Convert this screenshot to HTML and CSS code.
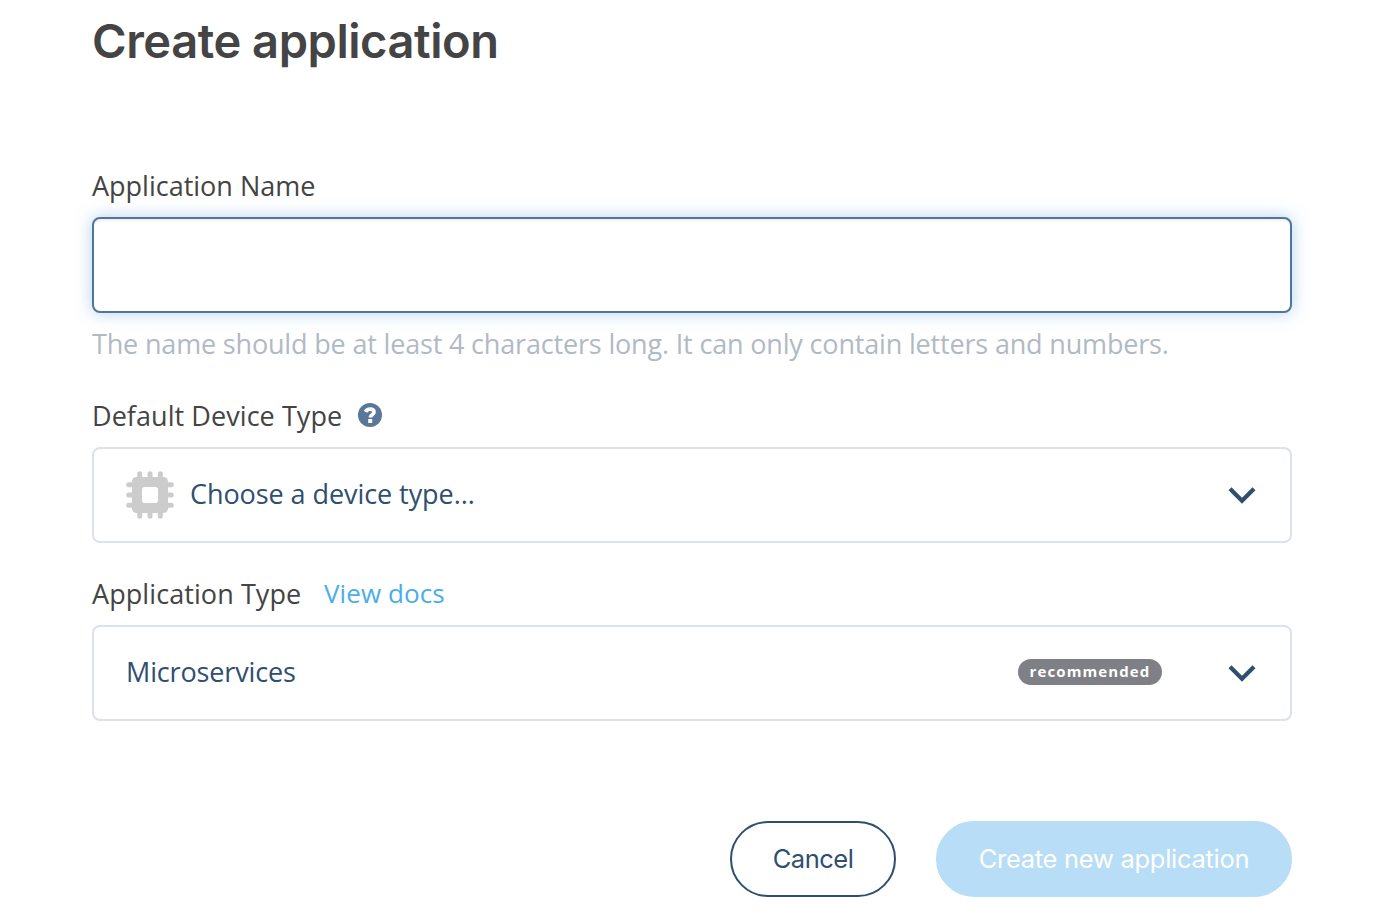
FILE: index.html
```html
<!DOCTYPE html>
<html lang="en">
<head>
<meta charset="utf-8">
<title>Create application</title>
<link rel="stylesheet" href="styles.css">
</head>
<body>
<main class="dialog">
  <h1 class="title"><span>Create application</span></h1>
  <form class="form">
    <div class="field">
      <label class="label" for="name"><span class="t-name">Application Name</span></label>
      <input class="control input" id="name" type="text">
      <p class="hint"><span>The name should be at least 4 characters long. It can only contain letters and numbers.</span></p>
    </div>
    <div class="field field-device">
      <div class="label"><span class="t-device">Default Device Type</span>
        <svg class="help" viewBox="0 0 24 24" width="24" height="24"><circle cx="12" cy="12" r="12" fill="#5a7799"/><path d="M7.600 8.900C8.500 7 10 6.200 12 6.200c2.300 0 4 1.100 4 3.000 0 2.500-3.700 2.500-3.700 5.300" fill="none" stroke="#fff" stroke-width="3.700"/><rect x="10.200" y="16" width="4" height="4" fill="#fff"/></svg>
      </div>
      <div class="control select">
        <svg class="chip" viewBox="0 0 48 48" width="48" height="48"><g stroke="#ccc" stroke-width="5" stroke-linecap="round"><path d="M13.700 2.700v42.600M24 2.700v42.600M34.300 2.700v42.600M2.700 13.700h42.600M2.700 24h42.600M2.700 34.300h42.600"/></g><rect x="6" y="6" width="36" height="36" rx="4.500" fill="#ccc"/><rect x="16" y="16" width="16" height="16" rx="2.500" fill="#fff"/></svg>
        <span class="value t-choose">Choose a device type...</span>
        <svg class="chevron" viewBox="0 0 28 18" width="28" height="18"><path d="M2 2.800l12 12 12-12" fill="none" stroke="#2f4f70" stroke-width="4.200"/></svg>
      </div>
    </div>
    <div class="field field-type">
      <div class="label"><span class="t-type">Application Type</span><a class="link">View docs</a></div>
      <div class="control select">
        <span class="value t-micro">Microservices</span>
        <span class="badge"><span>recommended</span></span>
        <svg class="chevron" viewBox="0 0 28 18" width="28" height="18"><path d="M2 2.800l12 12 12-12" fill="none" stroke="#2f4f70" stroke-width="4.200"/></svg>
      </div>
    </div>
    <div class="actions">
      <button type="button" class="btn btn-cancel"><span>Cancel</span></button>
      <button type="button" class="btn btn-create"><span>Create new application</span></button>
    </div>
  </form>
</main>
</body>
</html>
```
FILE: styles.css
```css
* { box-sizing: border-box; }
body { margin: 0; background: #fff; color: #444; font-family: "Open Sans", sans-serif; font-size: 27px; font-weight: 400; overflow: hidden; }
.dialog { width: 1200px; height: 911px; margin: 0 auto; }
.title { margin: 0; padding-top: 11px; height: 165px; font: 600 47px/60px Inter, sans-serif; letter-spacing: -.45px; color: #444; white-space: nowrap; }
.field { display: flex; flex-direction: column; }
.label { display: flex; align-items: center; height: 40px; margin-bottom: 12px; white-space: nowrap; }
.control { width: 100%; height: 96px; border: 2px solid #dde0f0; border-radius: 8px; background: #fff; }
.input { border-color: #527598; outline: none; box-shadow: inset 0 2px 2px rgba(0,0,0,.06), 0 0 16px rgba(102,165,225,.5); }
.hint { margin: 11px 0 0; height: 40px; line-height: 40px; color: #b0bac5; letter-spacing: -.17px; white-space: nowrap; }
.field-device { margin-top: 31px; }
.field-type { margin-top: 30px; }
.help { margin-left: 16px; }
.t-device { width: 250px; letter-spacing: .06px; }
.t-type { width: 209px; letter-spacing: .08px; }
.select { display: flex; align-items: center; padding: 0 34px 0 32px; color: #2f4f70; }
.chip { margin-right: 16px; }
.value { flex: 1; letter-spacing: -.07px; white-space: nowrap; margin-top: -4px; }
.t-micro { letter-spacing: -.14px; }
.link { margin-left: 23px; font-size: 26px; color: #49aeea; letter-spacing: .08px; }
.badge { display: flex; justify-content: center; width: 144px; height: 26px; border-radius: 13px; margin: -2px 66px 0 0; background: #7f8086; color: #fff; font: 700 15px/25px "Open Sans", sans-serif; letter-spacing: 1.1px; }
.actions { display: flex; justify-content: flex-end; gap: 40px; margin-top: 100px; }
.btn { height: 76px; border-radius: 38px; padding: 0; font: 400 25.500px/70px Inter, sans-serif; letter-spacing: -.28px; white-space: nowrap; }
.btn-cancel { width: 166px; border: 2px solid #2f4f70; background: #fff; color: #2f4f70; letter-spacing: -.5px; }
.btn-create { width: 356px; border: 2px solid #b8ddf7; background: #b8ddf7; color: #fff; }
```
